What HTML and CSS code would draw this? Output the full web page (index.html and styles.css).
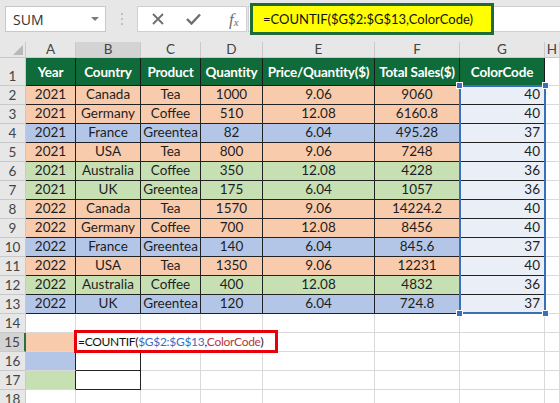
FILE: index.html
```html
<!DOCTYPE html>
<html lang="en">
<head>
    <meta charset="UTF-8">
    <title>COUNTIF ColorCode</title>
    <link rel="stylesheet" href="styles.css">
</head>
<body>

    <div class="formula-bar">
        <div class="name-box">
            <span>SUM</span>
            <span class="caret"></span>
        </div>
        <svg class="grip" width="4" height="14" viewBox="0 0 4 14">
            <circle cx="2" cy="2" r="1" fill="#b5b5b5"/>
            <circle cx="2" cy="7" r="1" fill="#b5b5b5"/>
            <circle cx="2" cy="12" r="1" fill="#b5b5b5"/>
        </svg>
        <div class="buttons">
            <svg width="12" height="12" viewBox="0 0 12 12">
                <path d="M1 1 L11 11 M11 1 L1 11" stroke="#6e6e6e" stroke-width="1.8"/>
            </svg>
            <svg width="15" height="12" viewBox="0 0 15 12">
                <path d="M1 6 L5.5 10.5 L14 1.5" stroke="#6e6e6e" stroke-width="2.4" fill="none"/>
            </svg>
            <span class="fx">f<sub>x</sub></span>
        </div>
        <div class="formula-input">
            <div class="formula-hl">=COUNTIF($G$2:$G$13,ColorCode)</div>
        </div>
    </div>

    <div class="sheet">
        <div class="row col-head">
            <div class="cell corner"><span class="tri"></span></div>
            <div class="cell">A</div>
            <div class="cell active">B</div>
            <div class="cell">C</div>
            <div class="cell">D</div>
            <div class="cell">E</div>
            <div class="cell">F</div>
            <div class="cell">G</div>
            <div class="cell">H</div>
        </div>
        <div class="row title">
            <div class="cell rh">1</div>
            <div class="cell th">Year</div>
            <div class="cell th">Country</div>
            <div class="cell th">Product</div>
            <div class="cell th">Quantity</div>
            <div class="cell th">Price/Quantity($)</div>
            <div class="cell th">Total Sales($)</div>
            <div class="cell th">ColorCode</div>
            <div class="cell"></div>
        </div>
        <div class="row or">
            <div class="cell rh">2</div>
            <div class="cell d">2021</div><div class="cell d">Canada</div><div class="cell d">Tea</div><div class="cell d">1000</div>
            <div class="cell d">9.06</div><div class="cell d">9060</div><div class="cell g">40</div><div class="cell"></div>
        </div>
        <div class="row or">
            <div class="cell rh">3</div>
            <div class="cell d">2021</div><div class="cell d">Germany</div><div class="cell d">Coffee</div><div class="cell d">510</div>
            <div class="cell d">12.08</div><div class="cell d">6160.8</div><div class="cell g">40</div><div class="cell"></div>
        </div>
        <div class="row bl">
            <div class="cell rh">4</div>
            <div class="cell d">2021</div><div class="cell d">France</div><div class="cell d">Greentea</div><div class="cell d">82</div>
            <div class="cell d">6.04</div><div class="cell d">495.28</div><div class="cell g">37</div><div class="cell"></div>
        </div>
        <div class="row or">
            <div class="cell rh">5</div>
            <div class="cell d">2021</div><div class="cell d">USA</div><div class="cell d">Tea</div><div class="cell d">800</div>
            <div class="cell d">9.06</div><div class="cell d">7248</div><div class="cell g">40</div><div class="cell"></div>
        </div>
        <div class="row gr">
            <div class="cell rh">6</div>
            <div class="cell d">2021</div><div class="cell d">Australia</div><div class="cell d">Coffee</div><div class="cell d">350</div>
            <div class="cell d">12.08</div><div class="cell d">4228</div><div class="cell g">36</div><div class="cell"></div>
        </div>
        <div class="row gr">
            <div class="cell rh">7</div>
            <div class="cell d">2021</div><div class="cell d">UK</div><div class="cell d">Greentea</div><div class="cell d">175</div>
            <div class="cell d">6.04</div><div class="cell d">1057</div><div class="cell g">36</div><div class="cell"></div>
        </div>
        <div class="row or">
            <div class="cell rh">8</div>
            <div class="cell d">2022</div><div class="cell d">Canada</div><div class="cell d">Tea</div><div class="cell d">1570</div>
            <div class="cell d">9.06</div><div class="cell d">14224.2</div><div class="cell g">40</div><div class="cell"></div>
        </div>
        <div class="row or">
            <div class="cell rh">9</div>
            <div class="cell d">2022</div><div class="cell d">Germany</div><div class="cell d">Coffee</div><div class="cell d">700</div>
            <div class="cell d">12.08</div><div class="cell d">8456</div><div class="cell g">40</div><div class="cell"></div>
        </div>
        <div class="row bl">
            <div class="cell rh">10</div>
            <div class="cell d">2022</div><div class="cell d">France</div><div class="cell d">Greentea</div><div class="cell d">140</div>
            <div class="cell d">6.04</div><div class="cell d">845.6</div><div class="cell g">37</div><div class="cell"></div>
        </div>
        <div class="row or">
            <div class="cell rh">11</div>
            <div class="cell d">2022</div><div class="cell d">USA</div><div class="cell d">Tea</div><div class="cell d">1350</div>
            <div class="cell d">9.06</div><div class="cell d">12231</div><div class="cell g">40</div><div class="cell"></div>
        </div>
        <div class="row gr">
            <div class="cell rh">12</div>
            <div class="cell d">2022</div><div class="cell d">Australia</div><div class="cell d">Coffee</div><div class="cell d">400</div>
            <div class="cell d">12.08</div><div class="cell d">4832</div><div class="cell g">36</div><div class="cell"></div>
        </div>
        <div class="row bl">
            <div class="cell rh">13</div>
            <div class="cell d">2022</div><div class="cell d">UK</div><div class="cell d">Greentea</div><div class="cell d">120</div>
            <div class="cell d">6.04</div><div class="cell d">724.8</div><div class="cell g">37</div><div class="cell"></div>
        </div>
        <div class="row">
            <div class="cell rh">14</div>
            <div class="cell"></div><div class="cell"></div><div class="cell"></div><div class="cell"></div>
            <div class="cell"></div><div class="cell"></div><div class="cell"></div><div class="cell"></div>
        </div>
        <div class="row">
            <div class="cell rh active-row">15</div>
            <div class="cell key or-fill"></div>
            <div class="cell box editing">
                <div class="edit-box">=COUNTIF(<span class="ref">$G$2:$G$13</span>,<span class="name">ColorCode</span>)</div>
            </div>
            <div class="cell"></div><div class="cell"></div>
            <div class="cell"></div><div class="cell"></div><div class="cell"></div><div class="cell"></div>
        </div>
        <div class="row">
            <div class="cell rh">16</div>
            <div class="cell key bl-fill"></div>
            <div class="cell box"></div>
            <div class="cell"></div><div class="cell"></div>
            <div class="cell"></div><div class="cell"></div><div class="cell"></div><div class="cell"></div>
        </div>
        <div class="row">
            <div class="cell rh">17</div>
            <div class="cell key gr-fill"></div>
            <div class="cell box"></div>
            <div class="cell"></div><div class="cell"></div>
            <div class="cell"></div><div class="cell"></div><div class="cell"></div><div class="cell"></div>
        </div>
        <div class="row">
            <div class="cell rh">18</div>
            <div class="cell"></div><div class="cell"></div><div class="cell"></div><div class="cell"></div>
            <div class="cell"></div><div class="cell"></div><div class="cell"></div><div class="cell"></div>
        </div>

        <!-- selection G2:G13 -->
        <div class="selection">
            <span class="handle tl"></span>
            <span class="handle tr"></span>
            <span class="handle bl-h"></span>
            <span class="handle br"></span>
        </div>
    </div>

</body>
</html>
```

FILE: styles.css
```css
* {
    margin: 0;
    padding: 0;
    box-sizing: border-box;
}

body {
    width: 560px;
    height: 403px;
    overflow: hidden;
    background: #ffffff;
    font-family: Lato, "Open Sans", sans-serif;
}

/* formula bar */

.formula-bar {
    height: 42px;
    background: #e7e7e7;
    display: flex;
    align-items: center;
    padding-left: 5px;
    padding-bottom: 4px;
}

.name-box {
    width: 101px;
    height: 26px;
    background: white;
    border: 1px solid #c8c8c8;
    display: flex;
    align-items: center;
    justify-content: space-between;
    padding: 0 6px 0 7px;
    font-family: "Open Sans", sans-serif;
    font-size: 14px;
    color: #333;
}

.caret {
    width: 0;
    height: 0;
    border-left: 4px solid transparent;
    border-right: 4px solid transparent;
    border-top: 4px solid #7a7a7a;
}

.grip {
    margin: 0 13px 0 14px;
}

.buttons {
    width: 110px;
    height: 26px;
    background: white;
    border: 1px solid #d0d0d0;
    display: flex;
    align-items: center;
    padding-left: 14px;
    gap: 22px;
}

.fx {
    font-family: "Liberation Serif", serif;
    font-style: italic;
    font-size: 17px;
    color: #6e6e6e;
    margin-left: 6px;
    line-height: 1;
}

.fx sub {
    font-size: 11px;
    vertical-align: -1px;
}

.formula-input {
    flex: 1;
    height: 26px;
    background: white;
    border: 1px solid #d0d0d0;
    border-right: none;
    margin-left: 1px;
    display: flex;
    align-items: center;
}

.formula-hl {
    flex: none;
    width: 244px;
    height: 32px;
    margin-left: 1px;
    background: #ffff00;
    border: 3px solid #1d6b3a;
    font-size: 13px;
    color: #111;
    display: flex;
    align-items: center;
    padding-left: 10px;
    white-space: nowrap;
    overflow: hidden;
}

/* grid */

.sheet {
    position: relative;
}

.row {
    display: grid;
    grid-template-columns: 26px 50px 65px 60px 62px 112px 85px 85px 15px;
    height: 19px;
    font-size: 13.5px;
    color: #1e1e1e;
}

.cell {
    border-right: 1px solid #d9d9d9;
    border-bottom: 1px solid #d9d9d9;
    display: flex;
    align-items: center;
    justify-content: center;
    white-space: nowrap;
    overflow: hidden;
    line-height: 1;
}

.col-head {
    height: 16px;
    background: #e7e7e7;
    color: #444;
    font-size: 13.5px;
}

.col-head .cell {
    border-color: #c9c9c9;
    align-items: flex-end;
    padding-bottom: 1px;
}

.col-head .active {
    background: #d3d3d3;
}

.corner {
    position: relative;
}

.tri {
    position: absolute;
    right: 2px;
    bottom: 2px;
    width: 0;
    height: 0;
    border-left: 10px solid transparent;
    border-bottom: 10px solid #b8b8b8;
}

.rh {
    background: #e7e7e7;
    color: #444;
    font-size: 13.5px;
    border-color: #c9c9c9;
    align-items: flex-end;
    padding-bottom: 2px;
}

.active-row {
    background: #d3d3d3;
    border-right: 2px solid #217346;
}

.title {
    height: 28px;
}

.th {
    background: #106b3a;
    color: white;
    font-weight: 700;
    font-size: 13.5px;
    letter-spacing: -0.2px;
    border-color: #1a1a1a;
    padding-top: 3px;
}

.d {
    border-color: #222;
}

.or .d {
    background: #f8cbad;
}

.bl .d {
    background: #b4c6e7;
}

.gr .d {
    background: #c6e0b4;
}

.g {
    background: #e9eef7;
    border-color: #222;
    justify-content: flex-end;
    padding-right: 4px;
}

.key {
    border-right-color: #222;
}

.or-fill {
    background: #f8cbad;
}

.bl-fill {
    background: #b4c6e7;
}

.gr-fill {
    background: #c6e0b4;
}

.box {
    border-color: #222;
}

.editing {
    overflow: visible;
    position: relative;
}

.edit-box {
    position: absolute;
    left: -2px;
    top: -3px;
    width: 204px;
    height: 23px;
    border: 3px solid #e8000b;
    background: white;
    font-size: 12px;
    letter-spacing: -0.3px;
    color: #111;
    padding-left: 1px;
    display: flex;
    align-items: center;
    white-space: nowrap;
    z-index: 2;
}

.ref {
    color: #3b6fc0;
}

.name {
    color: #b5383a;
}

.selection {
    position: absolute;
    left: 459px;
    top: 43px;
    width: 87px;
    height: 229px;
    border: 2px solid #3a6fb9;
}

.handle {
    position: absolute;
    width: 7px;
    height: 7px;
    background: #3a6fb9;
    border: 1px solid white;
}

.tl {
    left: -5px;
    top: -5px;
}

.tr {
    right: -5px;
    top: -5px;
}

.bl-h {
    left: -5px;
    bottom: -5px;
}

.br {
    right: -5px;
    bottom: -5px;
}
```
